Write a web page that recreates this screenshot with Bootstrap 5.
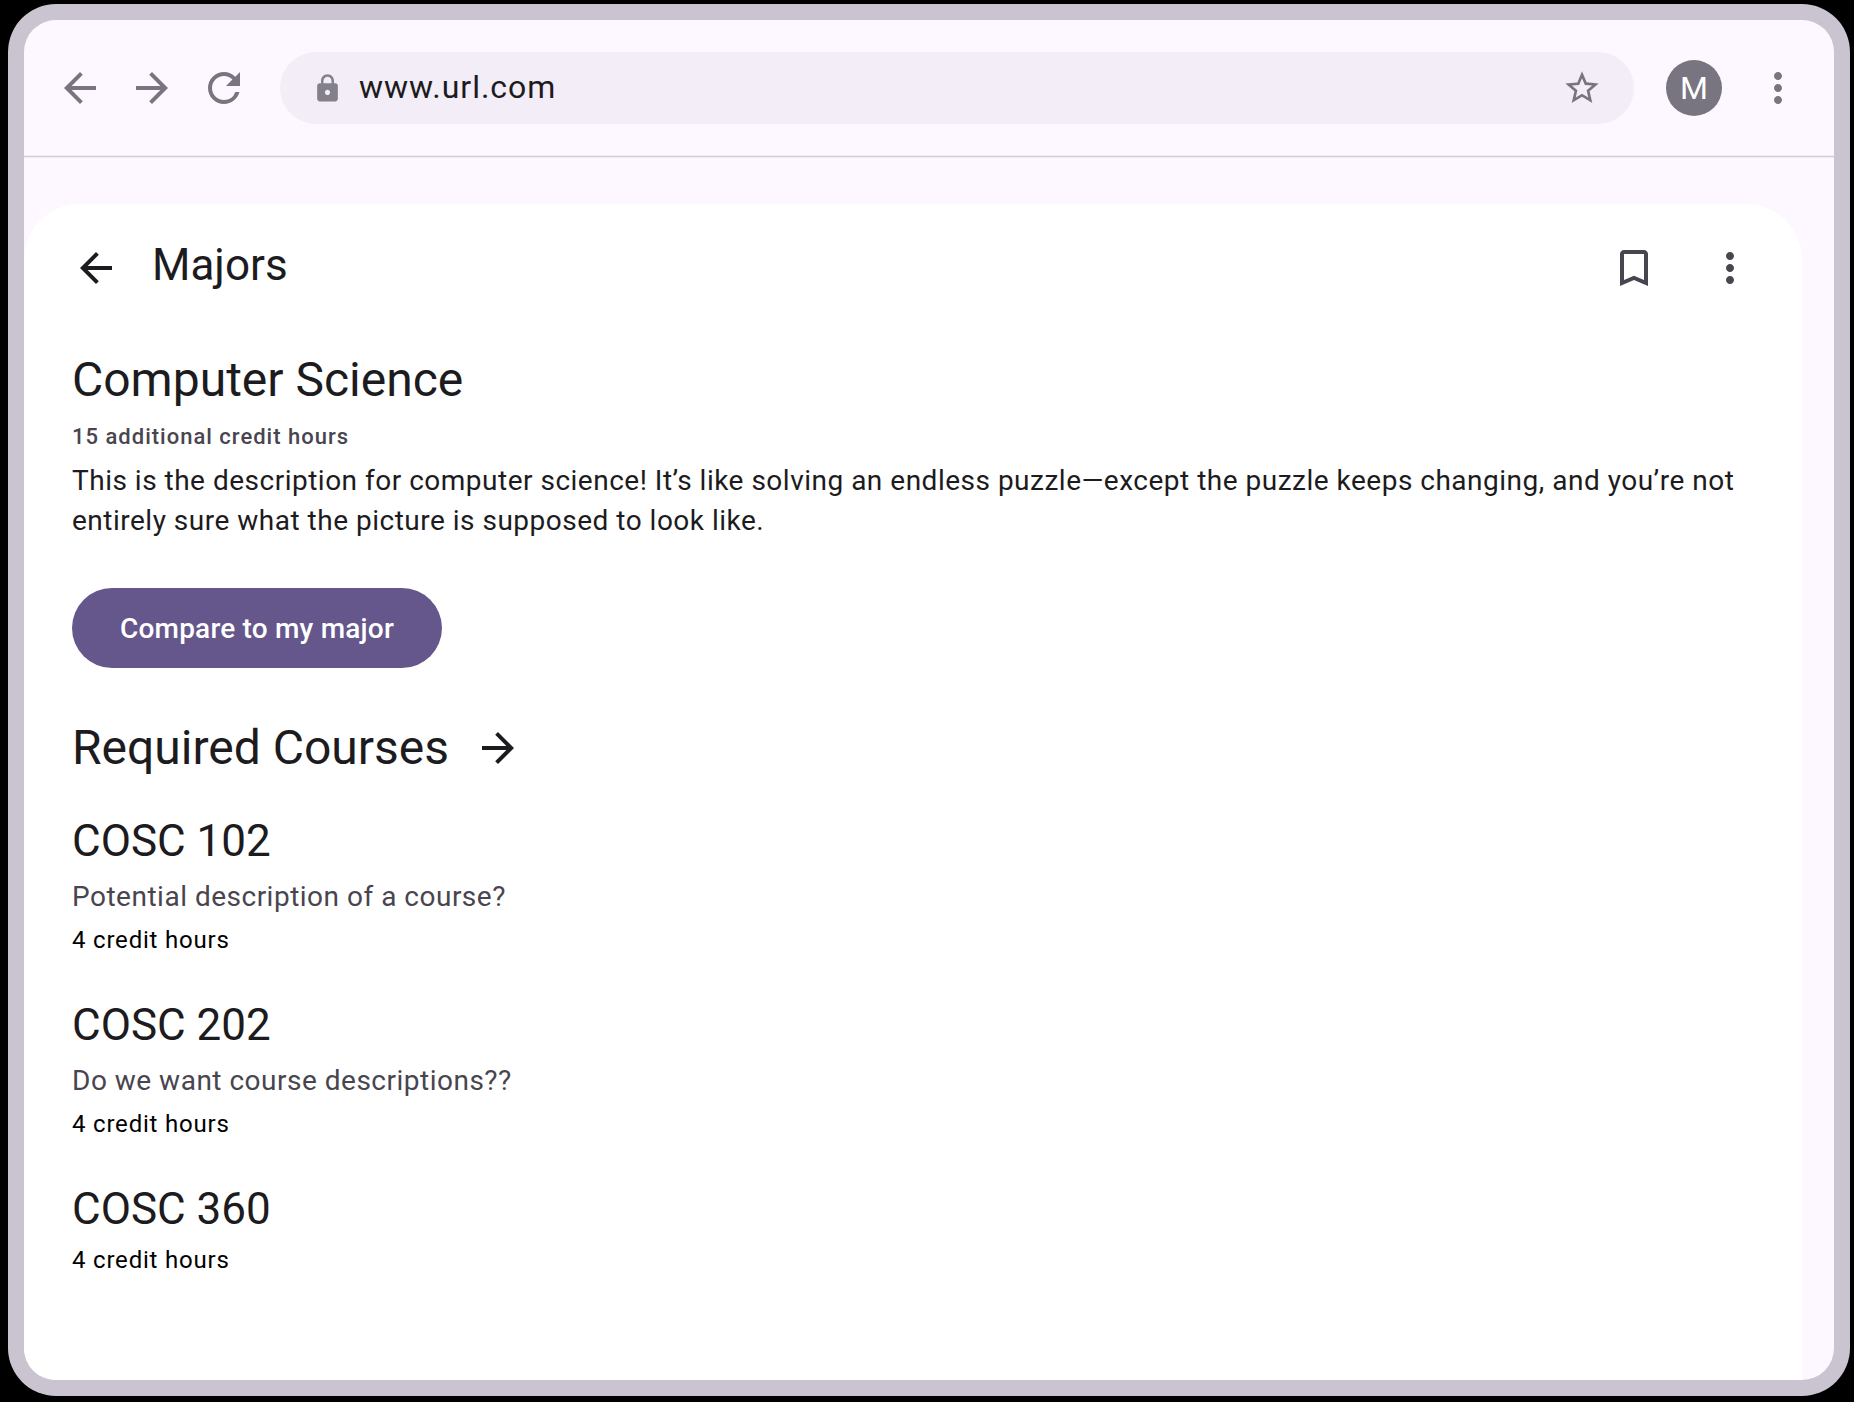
<!DOCTYPE html>
<html lang="en">
<head>
<meta charset="utf-8">
<meta name="viewport" content="width=device-width, initial-scale=1">
<title>Majors</title>
<link href="https://cdn.jsdelivr.net/npm/bootstrap@5.3.0/dist/css/bootstrap.min.css" rel="stylesheet">
<style>
  body { background: #000; font-family: Roboto, "Liberation Sans", sans-serif; color: #1c1b20; height: 1402px; overflow: hidden; padding: 20px 20px 22px 24px; }
  .window { width: 1810px; height: 1360px; border-radius: 32px; background: #fdf8ff; box-shadow: 0 0 0 16px #cac4d0; }
  .toolbar { height: 137px; padding: 0 32px; color: #787580; border-bottom: 1px solid #d2ced6; box-shadow: 0 1px 0 #f0ebf2, inset 0 -1px 0 #f0ebf2; }
  .ico { width: 48px; height: 48px; fill: currentColor; flex: none; display: block; }
  .nav-icons { gap: 24px; margin-right: 32px; }
  .omnibox { height: 72px; background: #f2edf7; padding: 0 32px; margin-right: 32px; }
  .ico-lock { width: 31px; height: 31px; opacity: .9; }
  .ico-star { width: 40px; height: 40px; }
  .url { font-size: 32px; line-height: 48px; margin-left: 16px; padding-bottom: 2px; color: #1c1b20; letter-spacing: 1px; }
  .avatar { width: 56px; height: 56px; background: #787580; color: #fff; font-size: 32px; line-height: 56px; margin-right: 32px; }
  .sheet { width: 1778px; margin-top: 47px; padding: 32px 48px 0; border-radius: 56px 56px 0 0; }
  .page-head { height: 56px; margin-bottom: 56px; }
  .page-head .ico { margin-top: 8px; }
  .page-title, .course-title { font-size: 44px; line-height: 56px; font-weight: 400; padding-top: 1px; }
  .course-title { margin-bottom: 7px; }
  .page-title { margin-left: 32px; }
  .variant { color: #48454f; }
  .headline { font-size: 48px; line-height: 64px; font-weight: 400; }
  .extra { font-size: 22px; line-height: 32px; font-weight: 500; letter-spacing: 1px; padding-top: 1px; margin-bottom: 7px; }
  .body-text { font-size: 28px; line-height: 40px; letter-spacing: .5px; padding-top: 1px; margin-bottom: 7px; }
  .btn-compare { --bs-btn-bg: #65578b; --bs-btn-color: #fff; --bs-btn-hover-bg: #574a7a; --bs-btn-hover-color: #fff; height: 80px; width: 370px; font-size: 28px; line-height: 40px; font-weight: 500; letter-spacing: .2px; margin: 47px 0 48px; padding: 2px 0 0; border: 0; }
  .required-head { gap: 25px; }
  .courses { gap: 40px; margin-top: 32px; }
  .hours { font-size: 24px; line-height: 32px; letter-spacing: .8px; color: #000; }
</style>
</head>
<body>
<svg class="d-none" aria-hidden="true">
  <symbol id="back" viewBox="0 0 24 24"><path d="M20 11H7.83l5.59-5.59L12 4l-8 8 8 8 1.41-1.41L7.83 13H20v-2z"/></symbol>
  <symbol id="forward" viewBox="0 0 24 24"><path d="M12 4l-1.41 1.41L16.17 11H4v2h12.17l-5.58 5.59L12 20l8-8z"/></symbol>
  <symbol id="more" viewBox="0 0 24 24"><path d="M12 8c1.1 0 2-.9 2-2s-.9-2-2-2-2 .9-2 2 .9 2 2 2zm0 2c-1.1 0-2 .9-2 2s.9 2 2 2 2-.9 2-2-.9-2-2-2zm0 6c-1.1 0-2 .9-2 2s.9 2 2 2 2-.9 2-2-.9-2-2-2z"/></symbol>
</svg>
<div class="window d-flex flex-column overflow-hidden">
  <nav class="toolbar d-flex align-items-center flex-shrink-0">
    <div class="nav-icons d-flex">
      <svg class="ico"><use href="#back"/></svg>
      <svg class="ico"><use href="#forward"/></svg>
      <svg class="ico" viewBox="0 0 24 24"><path d="M17.65 6.35A7.958 7.958 0 0 0 12 4c-4.42 0-7.99 3.58-7.99 8s3.57 8 7.99 8c3.73 0 6.84-2.55 7.73-6h-2.08A5.99 5.99 0 0 1 12 18c-3.31 0-6-2.69-6-6s2.69-6 6-6c1.66 0 3.14.69 4.22 1.78L13 11h7V4l-2.35 2.35z"/></svg>
    </div>
    <div class="omnibox rounded-pill d-flex align-items-center flex-grow-1">
      <svg class="ico ico-lock" viewBox="0 0 24 24"><path d="M18 8h-1V6c0-2.76-2.24-5-5-5S7 3.24 7 6v2H6c-1.1 0-2 .9-2 2v10c0 1.1.9 2 2 2h12c1.1 0 2-.9 2-2V10c0-1.1-.9-2-2-2zm-6 9c-1.1 0-2-.9-2-2s.9-2 2-2 2 .9 2 2-.9 2-2 2zm3.1-9H8.9V6c0-1.71 1.39-3.1 3.1-3.1s3.1 1.39 3.1 3.1v2z"/></svg>
      <span class="url">www.url.com</span>
      <svg class="ico ico-star ms-auto" viewBox="0 0 24 24"><path d="M22 9.24l-7.19-.62L12 2 9.19 8.63 2 9.24l5.46 4.73L5.82 21 12 17.27 18.18 21l-1.63-7.03L22 9.24zM12 15.4l-3.76 2.27 1-4.28-3.32-2.88 4.38-.38L12 6.1l1.71 4.04 4.38.38-3.32 2.88 1 4.28L12 15.4z"/></svg>
    </div>
    <div class="avatar rounded-circle text-center">M</div>
    <svg class="ico"><use href="#more"/></svg>
  </nav>
  <main class="sheet bg-white flex-grow-1">
    <header class="page-head d-flex">
      <svg class="ico"><use href="#back"/></svg>
      <h1 class="page-title mb-0">Majors</h1>
      <div class="variant d-flex gap-5 ms-auto">
        <svg class="ico" viewBox="0 0 24 24"><path d="M17 3H7c-1.1 0-2 .9-2 2v16l7-3 7 3V5c0-1.1-.9-2-2-2zm0 15l-5-2.18L7 18V5h10v13z"/></svg>
        <svg class="ico"><use href="#more"/></svg>
      </div>
    </header>
    <section>
      <h2 class="headline mb-2">Computer Science</h2>
      <div class="extra variant">15 additional credit hours</div>
      <p class="body-text mb-0">This is the description for computer science! It’s like solving an endless puzzle—except the puzzle keeps changing, and you’re not entirely sure what the picture is supposed to look like.</p>
      <button type="button" class="btn btn-compare rounded-pill d-block">Compare to my major</button>
    </section>
    <section>
      <div class="required-head d-flex align-items-center">
        <h2 class="headline mb-0">Required Courses</h2>
        <svg class="ico"><use href="#forward"/></svg>
      </div>
      <div class="courses d-flex flex-column">
        <article>
          <h3 class="course-title">COSC 102</h3>
          <p class="body-text variant">Potential description of a course?</p>
          <div class="hours">4 credit hours</div>
        </article>
        <article>
          <h3 class="course-title">COSC 202</h3>
          <p class="body-text variant">Do we want course descriptions??</p>
          <div class="hours">4 credit hours</div>
        </article>
        <article>
          <h3 class="course-title">COSC 360</h3>
          <div class="hours">4 credit hours</div>
        </article>
      </div>
    </section>
  </main>
</div>
<script src="https://cdn.jsdelivr.net/npm/bootstrap@5.3.0/dist/js/bootstrap.bundle.min.js"></script>
</body>
</html>
